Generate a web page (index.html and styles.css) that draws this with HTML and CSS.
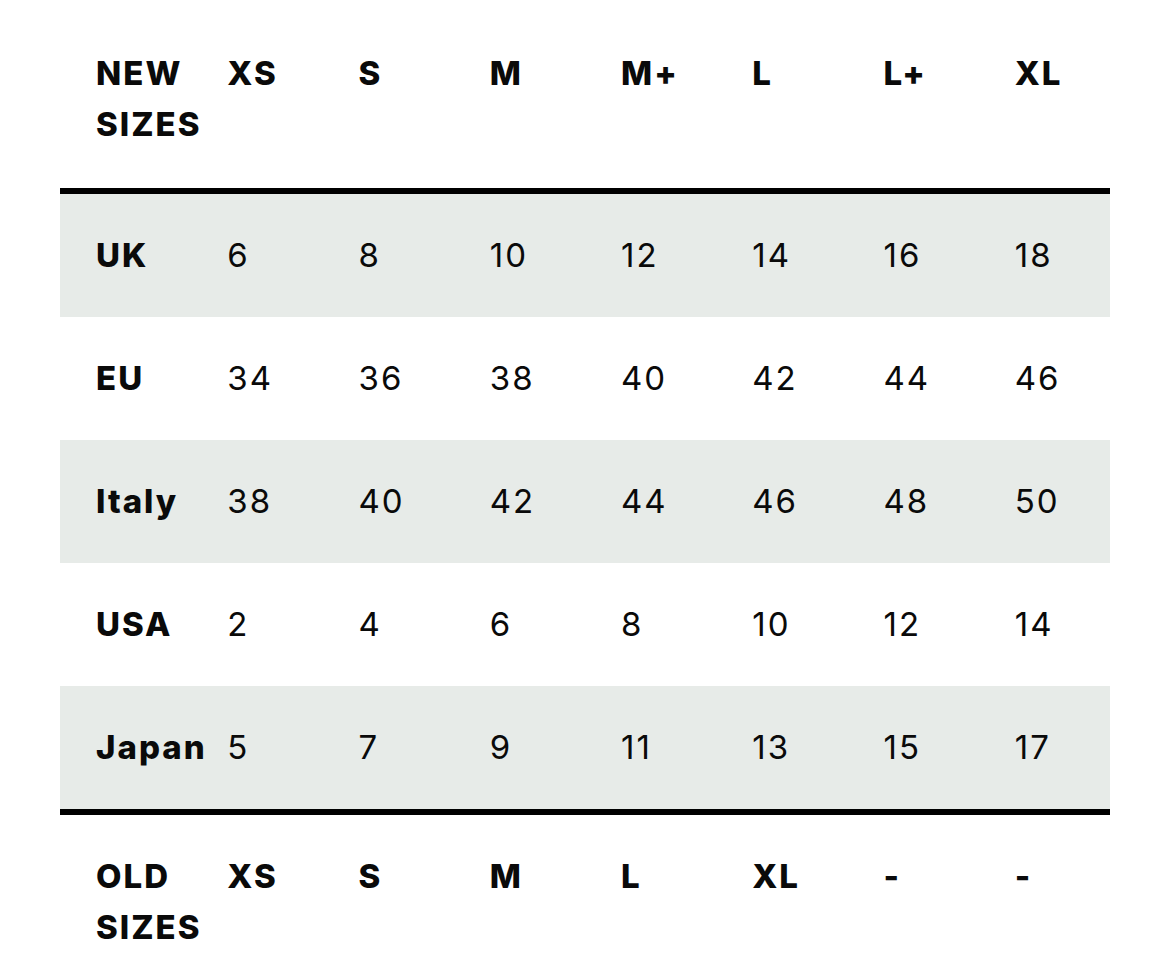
FILE: index.html
```html
<!DOCTYPE html>
<html>
<head>
<meta charset="utf-8">
<link rel="stylesheet" href="styles.css">
</head>
<body>
<table class="size-table">
  <colgroup>
    <col><col><col><col><col><col><col><col>
  </colgroup>
  <thead>
    <tr class="head-row">
      <th>NEW<br>SIZES</th><th>XS</th><th>S</th><th>M</th><th>M+</th><th>L</th><th>L+</th><th>XL</th>
    </tr>
  </thead>
  <tbody>
    <tr class="row shaded"><th>UK</th><td>6</td><td>8</td><td>10</td><td>12</td><td>14</td><td>16</td><td>18</td></tr>
    <tr class="row"><th>EU</th><td>34</td><td>36</td><td>38</td><td>40</td><td>42</td><td>44</td><td>46</td></tr>
    <tr class="row shaded"><th>Italy</th><td>38</td><td>40</td><td>42</td><td>44</td><td>46</td><td>48</td><td>50</td></tr>
    <tr class="row"><th>USA</th><td>2</td><td>4</td><td>6</td><td>8</td><td>10</td><td>12</td><td>14</td></tr>
    <tr class="row shaded last"><th>Japan</th><td>5</td><td>7</td><td>9</td><td>11</td><td>13</td><td>15</td><td>17</td></tr>
  </tbody>
  <tfoot>
    <tr class="foot-row">
      <th>OLD<br>SIZES</th><th>XS</th><th>S</th><th>M</th><th>L</th><th>XL</th><th>-</th><th>-</th>
    </tr>
  </tfoot>
</table>
</body>
</html>
```

FILE: styles.css
```css
html, body {
  margin: 0;
  padding: 0;
  background: #ffffff;
}

body {
  font-family: "Inter", "Liberation Sans", sans-serif;
  color: #0a0a0a;
}

.size-table {
  margin-left: 60px;
  width: 1050px;
  table-layout: fixed;
  border-collapse: collapse;
  border-spacing: 0;
  font-size: 33px;
  line-height: 51px;
}

.size-table col {
  width: 131.25px;
}

.size-table th,
.size-table td {
  padding: 0 0 0 36px;
  text-align: left;
  white-space: nowrap;
}

.size-table th {
  font-weight: 800;
  letter-spacing: 2px;
}

.size-table td {
  font-weight: 400;
  letter-spacing: 2px;
}

.head-row th {
  vertical-align: top;
  padding-top: 48px;
  padding-bottom: 38px;
  border-bottom: 6px solid #000;
}

.row th,
.row td {
  vertical-align: middle;
  padding-top: 36px;
  padding-bottom: 36px;
}

.shaded {
  background: #e7ebe8;
}

.last th,
.last td {
  border-bottom: 6px solid #000;
}

.foot-row th {
  vertical-align: top;
  padding-top: 36px;
  padding-bottom: 20px;
}
```
